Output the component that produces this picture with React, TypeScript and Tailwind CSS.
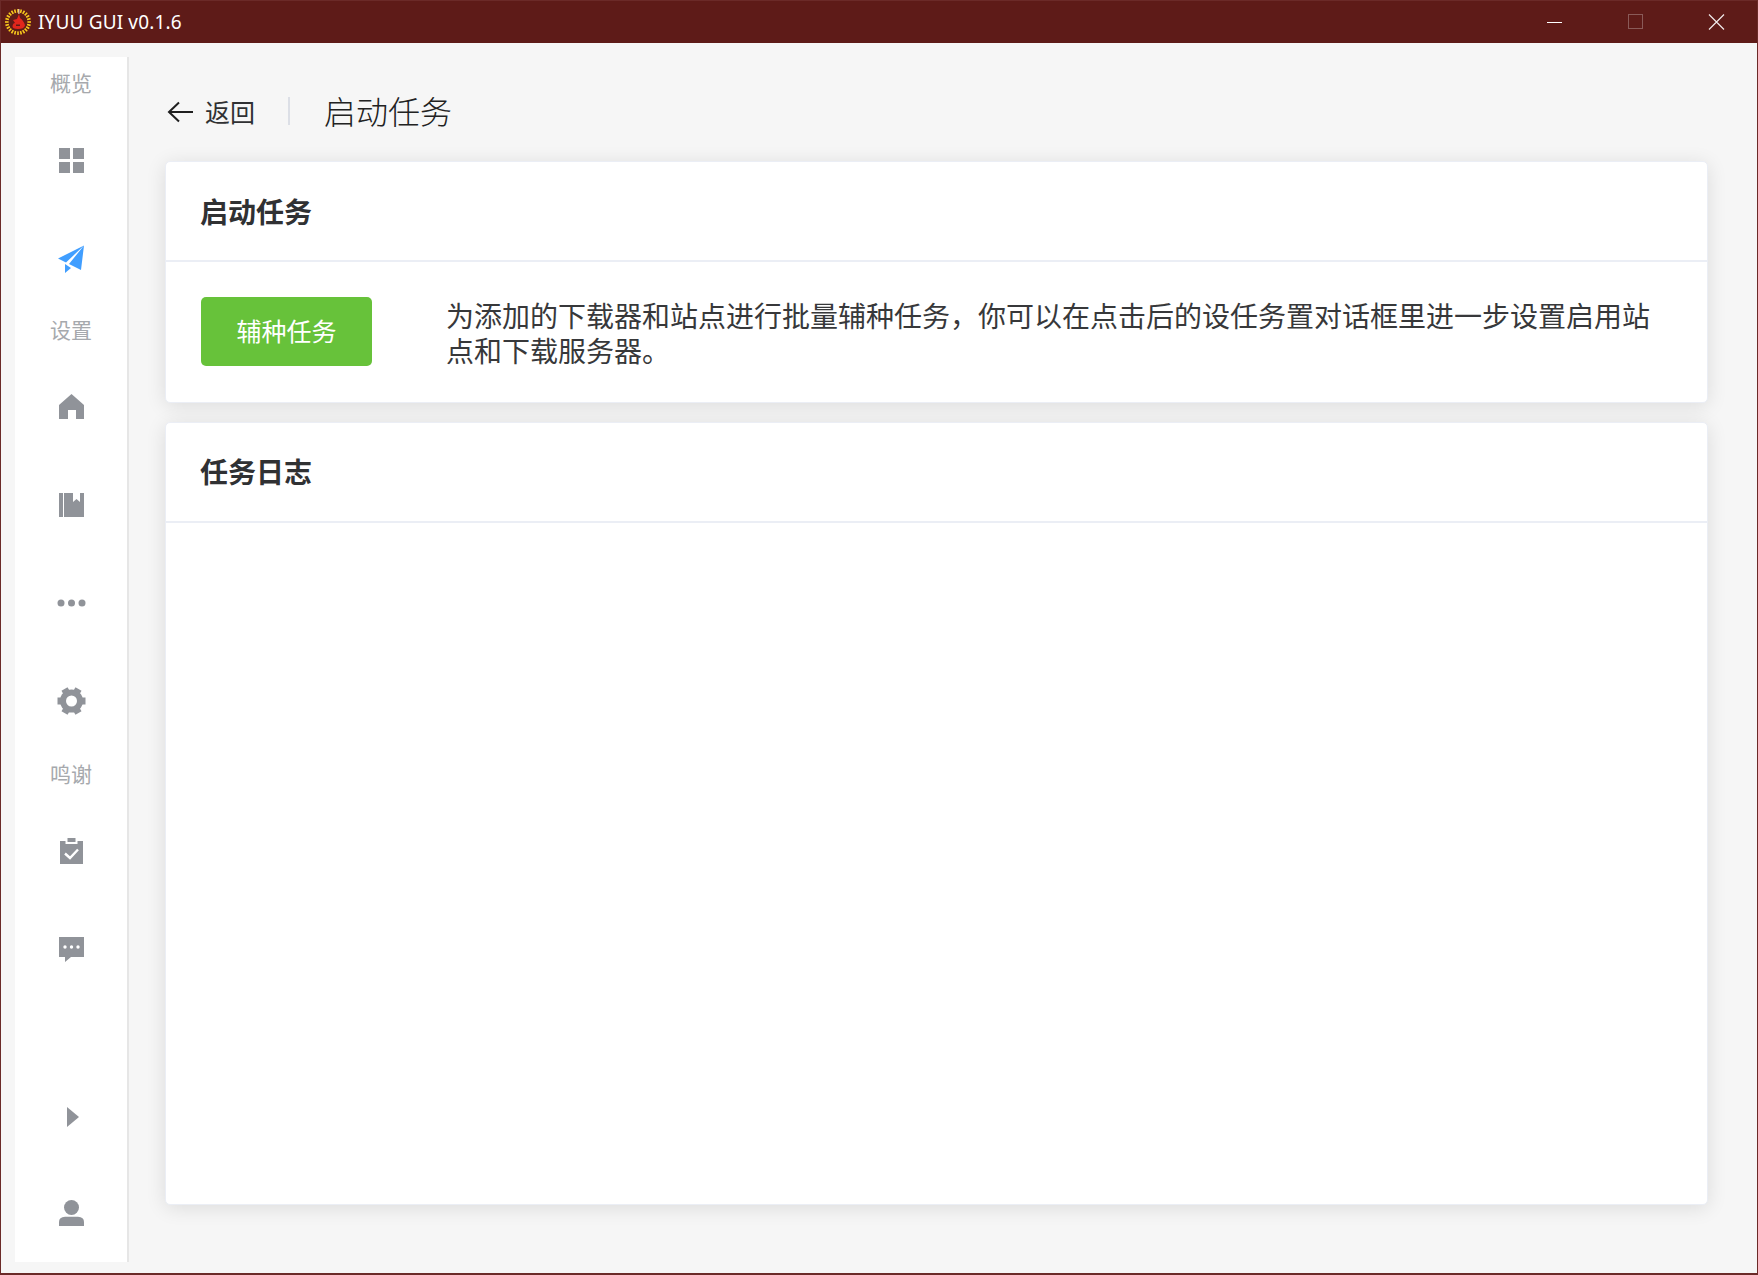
const CJK = "font-['Noto_Sans_CJK_SC','Noto_Sans',sans-serif]";

function Svg({ children, dy = 2 }: { children: React.ReactNode; dy?: number }) {
  return (
    <svg width={44} height={44} viewBox={`-1 ${-dy} 44 44`} fill="#909399">
      {children}
    </svg>
  );
}

const teeth = [0, 60, 120, 180, 240, 300];

const icons = {
  grid: (
    <Svg dy={1}>
      <rect x="9" y="10" width="11" height="11" />
      <rect x="23" y="10" width="11" height="11" />
      <rect x="9" y="24" width="11" height="11" />
      <rect x="23" y="24" width="11" height="11" />
    </Svg>
  ),
  plane: (
    <Svg>
      <path fill="#409eff" d="M34 8.5 L8 21.5 L16 25.5 Z M34 8.5 L19 27 L31 33 Z M15 27 L15 36 L21 31 Z" />
    </Svg>
  ),
  home: (
    <Svg>
      <path d="M21.5 9 L34 20 V34 H26 V25 H18 V34 H9 V20 Z" />
    </Svg>
  ),
  book: (
    <Svg>
      <rect x="9" y="10" width="4" height="24" />
      <path d="M14 10 H23 V19 L26.5 16 L30 19 V10 H34 V34 H14 Z" />
    </Svg>
  ),
  dots: (
    <Svg>
      <circle cx="11" cy="22" r="3.5" />
      <circle cx="21.5" cy="22" r="3.5" />
      <circle cx="32" cy="22" r="3.5" />
    </Svg>
  ),
  gear: (
    <Svg>
      <circle cx="21.5" cy="22" r="11.5" />
      {teeth.map((a) => (
        <rect key={a} x="32" y="18.5" width="3.5" height="7" transform={`rotate(${a} 21.5 22)`} />
      ))}
      <circle cx="21.5" cy="22" r="5.5" fill="#fff" />
    </Svg>
  ),
  claim: (
    <Svg dy={1}>
      <path d="M10 12 H15.5 V15 H27.5 V12 H33 V35 H10 Z" />
      <rect x="17.5" y="9" width="8" height="4" />
      <path d="M15 24.5 L20 29 L28 20.5" fill="none" stroke="#fff" strokeWidth="2.4" />
    </Svg>
  ),
  comment: (
    <Svg dy={1}>
      <path d="M9 10 H34 V30 H21 L15 35 V30 H9 Z" />
      <circle cx="15" cy="20" r="1.7" fill="#fff" />
      <circle cx="21.5" cy="20" r="1.7" fill="#fff" />
      <circle cx="28" cy="20" r="1.7" fill="#fff" />
    </Svg>
  ),
  caret: (
    <Svg>
      <path d="M17 12 L29 22 L17 32 Z" />
    </Svg>
  ),
  user: (
    <Svg dy={1}>
      <circle cx="21.5" cy="15.5" r="7.5" />
      <path d="M9 34 V30 Q9 25 15 24.7 H28 Q34 25 34 30 V34 Z" />
    </Svg>
  ),
};

function Item({ icon }: { icon: React.ReactNode }) {
  return <div className="flex h-[98px] items-center justify-center">{icon}</div>;
}

function Label({ text, h }: { text: string; h: string }) {
  return (
    <div className={`flex items-center justify-center pb-[2px] text-[21px] font-normal text-[#a6a9ad] ${h}`}>{text}</div>
  );
}

function Logo() {
  const rays = Array.from({ length: 24 }, (_, i) => i * 15);
  return (
    <svg width="28" height="28" viewBox="0 0 28 28" className="ml-[3px] shrink-0">
      {rays.map((a) => (
        <rect key={a} x="13.2" y="1" width="1.6" height="3.6" fill="#f8c91c" transform={`rotate(${a} 14 14)`} />
      ))}
      <path fill="#e1261c" d="M15 6 L16 10 Q20 13 21 17.5 Q20 21 14 21 Q8 21 8.5 18 Q9 15 11 15 L9 12 L13 11 Z" />
      <path fill="#5e1b18" d="M12 16.5 h4 v1.5 h-4 Z" />
      <path fill="#f5e6e0" d="M14.4 1 h1 v5 h-1 Z" />
    </svg>
  );
}

function Card({
  title,
  children,
  className,
  titleClass = "",
}: {
  title: string;
  children?: React.ReactNode;
  className: string;
  titleClass?: string;
}) {
  return (
    <section
      className={`rounded-[5px] border border-[#ebeef5] bg-white shadow-[0_3px_20px_0_rgba(0,0,0,0.11)] ${className}`}
    >
      <div
        className={`flex h-[100px] items-center border-b-2 border-[#ebeef5] px-[34px] text-[28px] leading-none font-bold text-[#303133] ${titleClass}`}
      >
        {title}
      </div>
      {children}
    </section>
  );
}

export default function App() {
  return (
    <div className={`flex h-screen flex-col overflow-hidden border-x border-b-2 border-[#6b2a28] bg-[#f6f6f6] ${CJK}`}>
      <header className="flex h-[43px] shrink-0 items-center border-t border-[#6b2a28] bg-[#5e1b18] text-white">
        <Logo />
        <span className="ml-[6px] font-['Noto_Sans',sans-serif] text-[19px] tracking-[0.15px]">IYUU GUI v0.1.6</span>
        <div className="ml-auto flex items-center">
          <svg width="243" height="30" viewBox="0 0 243 30">
            <path d="M33 15.5 H48" stroke="#fff" strokeWidth="1" />
            <rect x="114.5" y="7.5" width="14" height="14" fill="none" stroke="#8a5a58" strokeWidth="1" />
            <path d="M195 7.5 L210 22.5 M210 7.5 L195 22.5" stroke="#f1eaea" strokeWidth="1.2" />
          </svg>
        </div>
      </header>
      <div className="flex min-h-0 flex-1">
        <aside className="mt-[14px] mb-[11px] ml-[14px] flex w-[114px] shrink-0 flex-col border-r-2 border-[#e6e6e6] bg-white">
          <Label text="概览" h="h-[53px]" />
          <Item icon={icons.grid} />
          <Item icon={icons.plane} />
          <Label text="设置" h="h-[50px]" />
          <Item icon={icons.home} />
          <Item icon={icons.book} />
          <Item icon={icons.dots} />
          <Item icon={icons.gear} />
          <Label text="鸣谢" h="h-[53px]" />
          <Item icon={icons.claim} />
          <Item icon={icons.comment} />
          <div className="mt-auto">
            <Item icon={icons.caret} />
            <Item icon={icons.user} />
          </div>
        </aside>
        <main className="mr-[49px] ml-[36px] flex min-w-0 flex-1 flex-col pb-[68px]">
          <div className="flex h-[118px] shrink-0 items-center pt-[18px]">
            <svg width="26" height="26" viewBox="0 0 26 26" fill="none" stroke="#1f1f1f" strokeWidth="2" className="mt-[1px] ml-[2px]">
              <path d="M2 13 H26 M12 3.5 L2 13 L12 22.5" />
            </svg>
            <span className="mt-[1px] ml-[12px] text-[25px] text-[#303133]">返回</span>
            <span className="mr-[34px] ml-[33px] h-[28px] w-[2px] bg-[#dcdfe6]" />
            <span className="mb-[2px] text-[32px] font-light text-[#222]">启动任务</span>
          </div>
          <Card title="启动任务" className="h-[242px] shrink-0">
            <div className="flex items-center px-[35px] pt-[32px]">
              <button className="h-[69px] w-[171px] shrink-0 rounded-[5px] bg-[#67c23a] text-[25px] text-white">
                辅种任务
              </button>
              <p className="mt-[4px] ml-[74px] w-[1220px] text-[28px] leading-[35px] text-[#37383a]">
                为添加的下载器和站点进行批量辅种任务，你可以在点击后的设任务置对话框里进一步设置启用站点和下载服务器。
              </p>
            </div>
          </Card>
          <Card title="任务日志" titleClass="pb-[2px]" className="mt-[19px] min-h-0 flex-1" />
        </main>
      </div>
    </div>
  );
}
